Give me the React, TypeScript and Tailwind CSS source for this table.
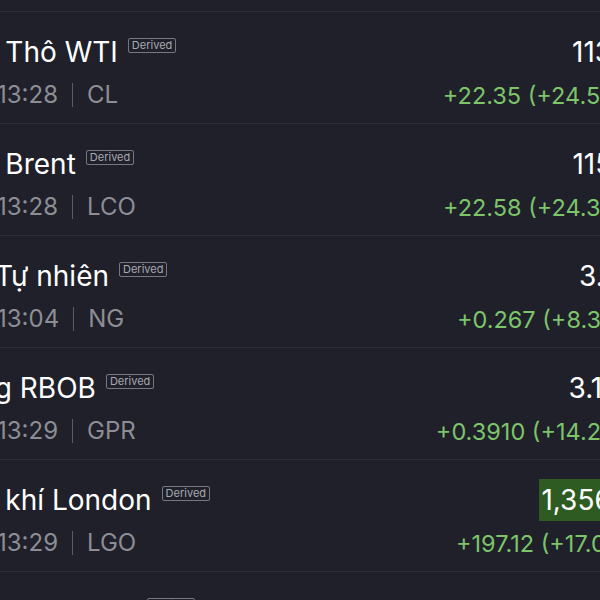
type Row = {
  name: string;
  time: string;
  code: string;
  price: string;
  change: string;
  flash?: boolean;
};

const rows: Row[] = [
  { name: "Dầu Thô WTI", time: "13:28", code: "CL", price: "113.43", change: "+22.35 (+24.54%)" },
  { name: "Dầu Brent", time: "13:28", code: "LCO", price: "115.49", change: "+22.58 (+24.30%)" },
  { name: "Khí Tự nhiên", time: "13:04", code: "NG", price: "3.467", change: "+0.267 (+8.35%)" },
  { name: "Xăng RBOB", time: "13:29", code: "GPR", price: "3.1420", change: "+0.3910 (+14.22%)" },
  { name: "Dầu khí London", time: "13:29", code: "LGO", price: "1,356.25", change: "+197.12 (+17.01%)", flash: true },
  { name: "Dầu Nhiên liệu", time: "13:29", code: "HO", price: "4.1250", change: "+0.6120 (+17.42%)" },
];

function Derived() {
  return (
    <span className="ml-[10px] mt-[2px] self-start rounded-[2px] border border-[#77787f] px-[3px] text-[11px] leading-[13px] text-[#a8a9b0]">
      Derived
    </span>
  );
}

function QuoteRow({ row }: { row: Row }) {
  return (
    <div className="flex h-[112px] shrink-0 justify-between border-b border-[#2c2d35] pt-[24px]">
      <div className="flex flex-col">
        <div className="-ml-[55px] flex items-start">
          <span className="whitespace-nowrap text-[28px] leading-[32px] text-white">{row.name}</span>
          <Derived />
        </div>
        <div className="-ml-[3px] mt-[13px] flex items-center whitespace-nowrap text-[24px] leading-[28px] text-[#8d8e95]">
          <span>{row.time}</span>
          <span className="mx-[14px] h-[24px] w-px bg-[#5c5d64]" />
          <span>{row.code}</span>
        </div>
      </div>
      <div className="flex flex-col items-end">
        <span
          className={
            row.flash
              ? "-mt-[5px] bg-[#2e5b22] px-[2px] py-[5px] text-[28px] leading-[32px] text-white"
              : "text-[28px] leading-[32px] text-white"
          }
        >
          {row.price}
        </span>
        <span
          className={
            row.flash
              ? "mr-[8px] mt-[9px] whitespace-nowrap text-[23.5px] leading-[28px] text-[#7dc46a]"
              : "mr-[8px] mt-[14px] whitespace-nowrap text-[23.5px] leading-[28px] text-[#7dc46a]"
          }
        >
          {row.change}
        </span>
      </div>
    </div>
  );
}

export default function App() {
  return (
    <div
      className="h-[600px] w-[600px] overflow-hidden bg-[#1f2029]"
      style={{ fontFamily: "Inter, 'Noto Sans', sans-serif" }}
    >
      <div className="mt-[11px] flex w-[655px] flex-col border-t border-[#2c2d35]">
        {rows.map((r) => (
          <QuoteRow key={r.code} row={r} />
        ))}
      </div>
    </div>
  );
}
